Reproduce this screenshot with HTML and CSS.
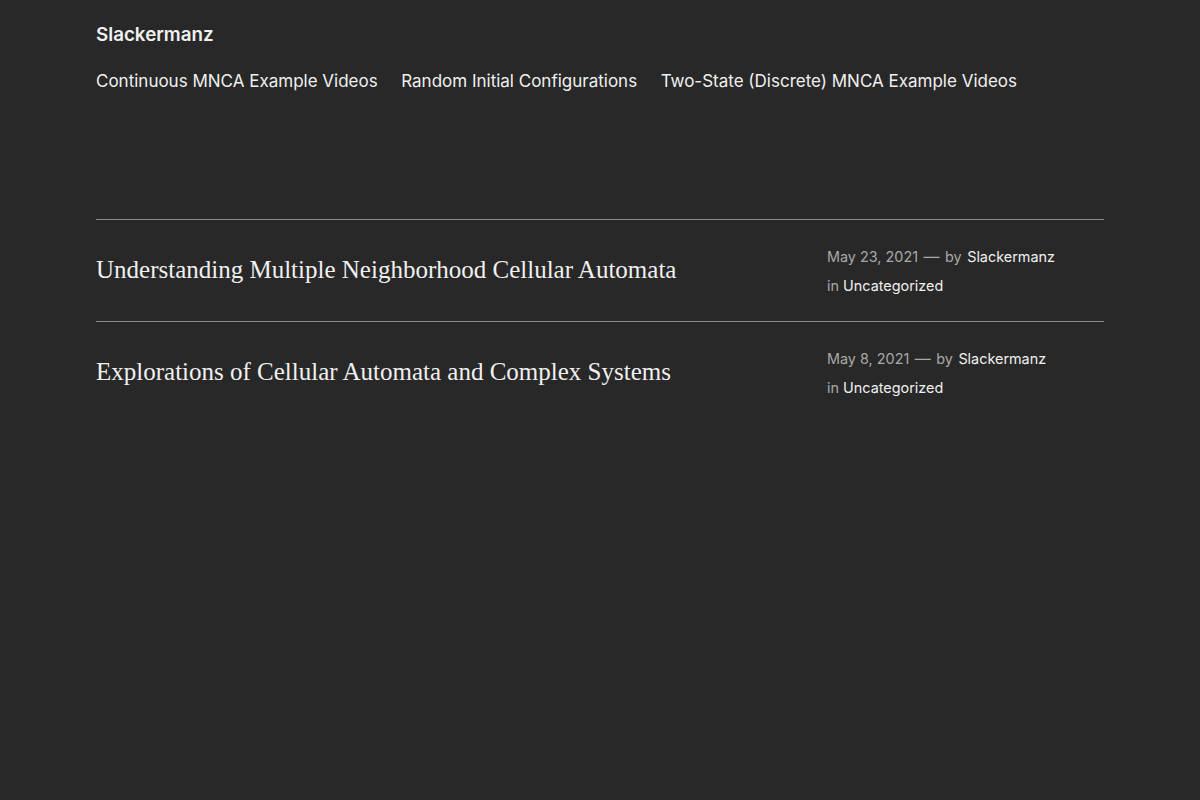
FILE: index.html
```html
<!DOCTYPE html>
<html lang="en">
<head>
  <meta charset="UTF-8" />
  <meta name="viewport" content="width=device-width, initial-scale=1.0" />
  <title>Slackermanz</title>
  <link rel="stylesheet" href="styles.css">
</head>
<body>
  <header class="site-header">
    <a class="site-title" href="#">Slackermanz</a>
    <nav class="site-nav">
      <a href="#">Continuous MNCA Example Videos</a>
      <a href="#">Random Initial Configurations</a>
      <a href="#">Two-State (Discrete) MNCA Example Videos</a>
    </nav>
  </header>

  <main class="posts">
    <article class="post">
      <h2 class="post-title"><a href="#">Understanding Multiple Neighborhood Cellular Automata</a></h2>
      <div class="post-meta">
        <div class="byline">
          <span class="muted">May 23, 2021</span>
          <span class="muted dash">—</span>
          <span class="muted">by</span>
          <a href="#">Slackermanz</a>
        </div>
        <div><span class="muted">in</span> <a href="#">Uncategorized</a></div>
      </div>
    </article>
    <article class="post">
      <h2 class="post-title"><a href="#">Explorations of Cellular Automata and Complex Systems</a></h2>
      <div class="post-meta">
        <div class="byline">
          <span class="muted">May 8, 2021</span>
          <span class="muted dash">—</span>
          <span class="muted">by</span>
          <a href="#">Slackermanz</a>
        </div>
        <div><span class="muted">in</span> <a href="#">Uncategorized</a></div>
      </div>
    </article>
  </main>
</body>
</html>
```

FILE: styles.css
```css
body {
  font-family: Inter, "Noto Sans", sans-serif;
  background: #282828;
  color: #f0f0f0;
  margin: 0;
  padding: 0 96px;
}
a {
  color: #f0f0f0;
  text-decoration: none;
}
.site-header {
  padding-top: 24px;
}
.site-title {
  display: block;
  font-size: 18.8px;
  font-weight: 600;
  line-height: 22px;
}
.site-nav {
  display: flex;
  gap: 23.5px;
  margin-top: 24px;
  font-size: 17px;
  line-height: 22px;
}
.posts {
  margin-top: 127px;
}
.post {
  display: grid;
  grid-template-columns: 1fr 277px;
  align-items: start;
  border-top: 1px solid #8a8a8a;
  padding: 24px 0 24px;
  height: 53px;
}
.post-title {
  margin: 11px 0 0;
  font-family: "Liberation Serif", serif;
  font-weight: 400;
  font-size: 25px;
  line-height: 30px;
}
.post-meta {
  font-size: 14.4px;
  line-height: 29px;
  margin-top: -2px;
}
.byline {
  display: flex;
  gap: 5.5px;
}
.dash {
  font-size: 16px;
}
.muted {
  color: #a8a8a8;
}
```
